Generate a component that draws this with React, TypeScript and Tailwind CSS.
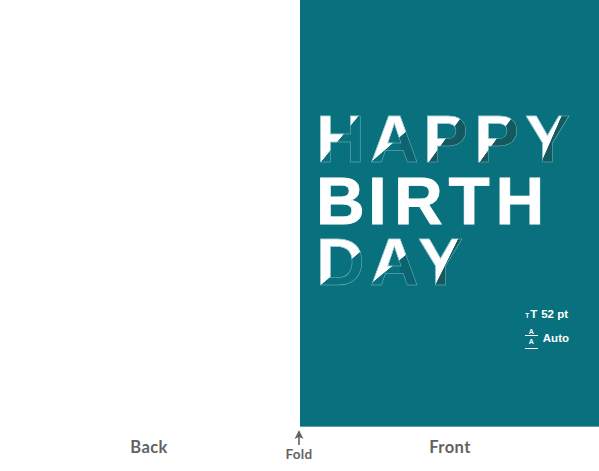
import React from 'react';

type Line = [number, number, number, number];

const BOX_W = 56;
const BOX_H = 61.5;

const WHITE = '#ffffff';
const CLEAR = 'rgba(255,255,255,0)';

// Hard-stop gradient that splits the letter box along a line: a on the upper left, b on the lower right
function split(line: Line, a: string, b: string) {
  const [x1, y1, x2, y2] = line;
  const len = Math.hypot(x2 - x1, y2 - y1);
  let nx = (y2 - y1) / len;
  let ny = -(x2 - x1) / len;
  if (nx + ny < 0) {
    nx = -nx;
    ny = -ny;
  }
  const angle = (Math.atan2(nx, -ny) * 180) / Math.PI;
  const total = BOX_W * Math.abs(nx) + BOX_H * Math.abs(ny);
  const t = (x1 - BOX_W / 2) * nx + (y1 - BOX_H / 2) * ny + total / 2;
  return `linear-gradient(${angle}deg,${a} ${t - 0.3}px,${b} ${t + 0.3}px)`;
}

interface LetterProps {
  ch: string;
  width: string;
  base?: string; // colour of the folded part
  cut?: Line;
  shade?: Line;
}

const Letter: React.FC<LetterProps> = ({ ch, width, base = '#08717d', cut, shade }) => {
  if (!cut) {
    return <span className={`block shrink-0 text-white [-webkit-text-stroke:0.8px_#ffffff] ${width}`}>{ch}</span>;
  }
  const layers = [split(cut, WHITE, CLEAR)];
  if (shade) layers.push(split(shade, 'rgba(11,100,112,0)', 'rgb(11,100,112)'));
  return (
    <span className={`block shrink-0 ${width}`}>
      <span
        className="block w-[56px] bg-clip-text text-transparent [-webkit-text-stroke:0.5px_#7dbac3]"
        style={{ backgroundImage: layers.join(','), backgroundColor: base }}
      >
        {ch}
      </span>
    </span>
  );
};

const Row: React.FC<{ children: React.ReactNode }> = ({ children }) => (
  <div className="flex h-[61.5px] leading-[61.5px]">{children}</div>
);

const DARK = '#14595f';

export default function App() {
  return (
    <div className="w-[599px] h-[471px] bg-white overflow-hidden relative font-['Lato','Open_Sans',sans-serif]">
      {/* Card */}
      <div className="flex h-[427px]">
        <div className="w-[300px] bg-white" />
        <div className="flex-1 flex flex-col bg-[#08717d] pt-[108px] pl-[16px] border-b border-[#5d9fa8]">
          <div className="font-['Liberation_Sans',sans-serif] font-bold text-[67.5px]">
            <Row>
              <Letter ch="H" width="w-[54px]" cut={[49, 0, 0, 60]} />
              <Letter ch="A" width="w-[53px]" cut={[63, 0, 0, 55]} shade={[28, 30, 36, 60]} />
              <Letter ch="P" width="w-[51px]" base={DARK} cut={[45, 0, 1.4, 60]} />
              <Letter ch="P" width="w-[51px]" base={DARK} cut={[45, 0, 1.4, 60]} />
              <Letter ch="Y" width="w-[50px]" base={DARK} cut={[40, 0, 13.8, 60]} />
            </Row>
            <Row>
              <Letter ch="B" width="w-[52px]" />
              <Letter ch="I" width="w-[26px]" />
              <Letter ch="R" width="w-[54.5px]" />
              <Letter ch="T" width="w-[47px]" />
              <Letter ch="H" width="w-[50px]" />
            </Row>
            <Row>
              <Letter ch="D" width="w-[54px]" cut={[69, 0, 0, 58]} />
              <Letter ch="A" width="w-[48px]" cut={[64.8, 0, 0, 53.4]} shade={[28, 30, 36, 60]} />
              <Letter ch="Y" width="w-[50px]" base={DARK} cut={[44, 0, 14.3, 60]} />
            </Row>
          </div>

          {/* Type settings */}
          <div className="mt-[14px] flex flex-col items-end pr-[30px] text-white font-bold text-[11.5px] font-['Liberation_Sans',sans-serif] leading-[14px]">
            <div className="flex items-baseline gap-[4px] pr-[1px]">
              <span className="flex items-baseline">
                <span className="text-[6.5px] mr-[1px]">T</span>
                <span className="text-[11.5px]">T</span>
              </span>
              <span>52 pt</span>
            </div>
            <div className="mt-[5px] flex items-center gap-[5px]">
              <div className="flex flex-col items-center w-[13px] text-[7px]">
                <span className="w-full text-center border-b border-white h-[8px] leading-[7px]">A</span>
                <span className="w-full text-center border-b border-white h-[13px] leading-[12px]">A</span>
              </div>
              <span>Auto</span>
            </div>
          </div>
        </div>
      </div>

      {/* Labels */}
      <div className="flex text-[#626262] font-bold text-[16.5px] tracking-[0.4px] leading-[20px] pt-[10px]">
        <div className="w-[298px] text-center">Back</div>
        <div className="w-[301px] pl-[3px] text-center">Front</div>
      </div>

      {/* Fold marker */}
      <div className="absolute left-[279px] top-[430px] w-[40px] flex flex-col items-center text-[#626262]">
        <svg width="10" height="15" viewBox="0 0 10 15" className="block">
          <path d="M5 0 L9.5 9 L5.8 7.2 V15 H4.2 V7.2 L0.5 9 Z" fill="currentColor" />
        </svg>
        <span className="font-bold text-[13.5px] tracking-[0.3px] leading-[19px]">Fold</span>
      </div>
    </div>
  );
}
